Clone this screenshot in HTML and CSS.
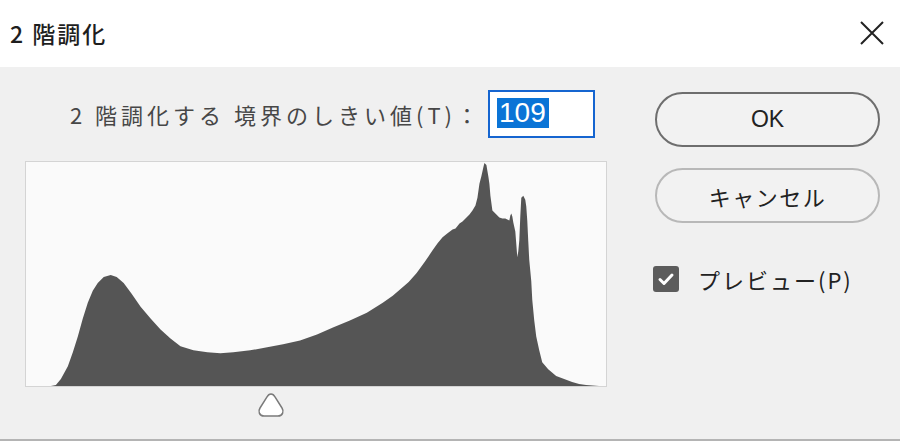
FILE: index.html
```html
<!DOCTYPE html>
<html>
<head>
<meta charset="utf-8">
<title>2 階調化</title>
<link rel="stylesheet" href="styles.css">
</head>

<body>
<div id="dialog">
	<div class="titlebar">
		<span class="title">2 階調化</span>
		<svg class="close" width="24" height="24" viewBox="0 0 24 24">
			<path d="M1 1 L23 23 M23 1 L1 23" stroke="#222" stroke-width="2" fill="none"/>
		</svg>
	</div>
	<div class="content">
		<div class="left">
			<div class="level-row">
				<span class="label">2 階調化する 境界のしきい値(T)：</span>
				<div class="input"><span class="sel">109</span></div>
			</div>
			<div class="histogram">
				<svg width="580" height="224" viewBox="0 0 582 226" preserveAspectRatio="none">
					<path fill="#555" d="M0 226 L25 226 L30 225 L35 219 L42 206 L47 192 L52 176 L57 158 L62 142 L67 130 L72 122 L78 116 L85 114 L91 116 L98 122 L106 133 L115 146 L125 158 L135 169 L145 178 L155 186 L168 190 L182 192 L195 193 L208 192 L225 190 L242 187 L258 184 L275 180 L292 174 L308 167 L325 160 L342 152 L358 142 L368 135 L375 129 L384 121 L392 112 L400 101 L404 95 L408 89 L413 82 L418 76 L423 72 L428 68 L431 67 L435 62 L438 60 L442 56 L445 53 L448 49 L451 44 L453 36 L455 22 L457 14 L459 5 L460 1 L462 3 L463 9 L464 15 L465 22 L466 34 L468 49 L471 52 L475 56 L478 57 L481 57 L485 59 L486 54 L487 52 L488 55 L489 61 L491 70 L493 96 L494 90 L495 79 L496 55 L497 36 L499 34 L501 38 L502 45 L503 59 L504 80 L505 99 L507 120 L508 139 L510 160 L512 176 L515 190 L518 202 L524 209 L532 216 L540 219 L548 222 L555 224 L562 225 L575 226 L582 226 Z"/>
				</svg>
			</div>
			<div class="slider">
				<svg width="28" height="26" viewBox="0 0 28 26">
					<path d="M14 2 C12 2 11 3 10 5 L3 16 C1 19 2 24 7 24 L21 24 C26 24 27 19 25 16 L18 5 C17 3 16 2 14 2 Z" fill="#fff" stroke="#7a7a7a" stroke-width="1.5"/>
				</svg>
			</div>
		</div>
		<div class="right">
			<div class="btn btn-ok">OK</div>
			<div class="btn btn-cancel">キャンセル</div>
			<div class="preview">
				<span class="check">
					<svg width="26" height="26" viewBox="0 0 26 26">
						<path d="M7 13.5 L11 17.5 L19 9" stroke="#fff" stroke-width="3" fill="none" stroke-linecap="round" stroke-linejoin="round"/>
					</svg>
				</span>
				<span class="preview-text">プレビュー(P)</span>
			</div>
		</div>
	</div>
</div>
</body>
</html>
```

FILE: styles.css
```css
html, body{
	margin:0;
	padding:0;
}
body{
	width:900px;
	height:441px;
	overflow:hidden;
	background:#f0f0f0;
	font-family:"Noto Sans CJK JP", "Liberation Sans", sans-serif;
}
#dialog{
	display:flex;
	flex-direction:column;
	height:441px;
	box-sizing:border-box;
	border-bottom:2px solid #b4b4b4;
}
.titlebar{
	height:67px;
	background:#fff;
	display:flex;
	align-items:center;
	justify-content:space-between;
	padding:0 16px 0 10px;
	box-sizing:border-box;
}
.title{
	font-size:23px;
	line-height:26px;
	font-weight:500;
	letter-spacing:2px;
	color:#1e1e1e;
	margin-top:-1px;
}
.close{
	display:block;
	margin-top:-1px;
}
.content{
	flex:1;
	display:flex;
	padding:23px 20px 0 25px;
}
.left{
	width:582px;
}
.level-row{
	display:flex;
	justify-content:flex-end;
	align-items:center;
	gap:6px;
	padding-right:12px;
	height:48px;
}
.label{
	font-size:22px;
	line-height:26px;
	color:#474747;
	letter-spacing:4px;
}
.input{
	width:107px;
	height:48px;
	box-sizing:border-box;
	border:2px solid #1565d0;
	background:#fff;
	padding:6px 0 0 7px;
}
.sel{
	display:inline-block;
	background:#0a74d6;
	color:#fff;
	font-family:"Liberation Sans", sans-serif;
	font-size:28px;
	line-height:30px;
	padding:0 3px 0 2px;
}
.histogram{
	margin-top:23px;
	width:582px;
	height:226px;
	box-sizing:border-box;
	border:1px solid #d4d4d4;
	background:#fafafa;
}
.histogram svg{
	display:block;
}
.slider{
	margin:5px 0 0 232px;
	height:26px;
}
.slider svg{
	display:block;
}
.right{
	margin-left:48px;
	width:225px;
	padding-top:2px;
	display:flex;
	flex-direction:column;
}
.btn{
	height:55px;
	box-sizing:border-box;
	border-radius:28px;
	display:flex;
	align-items:center;
	justify-content:center;
	color:#222;
	background:#f2f2f2;
}
.btn-ok{
	border:2px solid #6e6e6e;
	font-family:"Liberation Sans", sans-serif;
	font-size:23px;
}
.btn-cancel{
	margin-top:21px;
	border:2px solid #b8b8b8;
	font-size:22px;
	letter-spacing:1.5px;
}
.preview{
	margin-top:43px;
	margin-left:-2px;
	display:flex;
	align-items:center;
	gap:19px;
}
.check{
	width:26px;
	height:26px;
	border-radius:3px;
	background:#5c5c5c;
	display:block;
}
.check svg{
	display:block;
}
.preview-text{
	font-size:22px;
	line-height:26px;
	letter-spacing:2px;
	color:#222;
}
```
